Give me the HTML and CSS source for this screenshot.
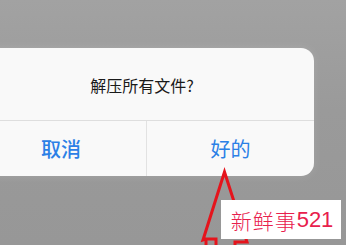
FILE: index.html
```html
<!DOCTYPE html>
<html lang="zh">
<head>
<meta charset="utf-8">
<link rel="stylesheet" href="styles.css">
</head>
<body>
<div class="screen">
  <div class="dialog">
    <div class="title">解压所有文件?</div>
    <div class="actions">
      <div class="btn cancel">取消</div>
      <div class="btn ok">好的</div>
    </div>
  </div>
  <svg class="arrow" width="346" height="245" viewBox="0 0 346 245">
    <polyline points="206,248 206,239 216,239 216,248" fill="none" stroke="#e5141c" stroke-width="3" stroke-linejoin="miter"/>
    <polyline points="206,239 203,240 224.5,172 247,242 235,242 235,248" fill="none" stroke="#e5141c" stroke-width="3" stroke-linejoin="miter"/>
  </svg>
  <div class="mark"><span class="kai">新鲜事</span><span class="num">521</span></div>
</div>
</body>
</html>
```
FILE: styles.css
```css
html, body {
  margin: 0;
  padding: 0;
}
body {
  width: 346px;
  height: 245px;
  overflow: hidden;
  background: linear-gradient(#a2a2a2, #9a9a9a 45%, #979797);
  font-family: "Noto Sans CJK SC", "Noto Sans", sans-serif;
}
.screen {
  position: relative;
  width: 346px;
  height: 245px;
  padding-top: 48px;
  box-sizing: border-box;
}
.dialog {
  margin-left: -24px;
  width: 338px;
  height: 128px;
  background: #f9f9f9;
  border-radius: 0 13px 13px 0;
  box-shadow: 0 0 10px rgba(255,255,255,0.12);
  display: flex;
  flex-direction: column;
}
.title {
  height: 73px;
  box-sizing: border-box;
  border-bottom: 1px solid #dedede;
  display: flex;
  align-items: center;
  justify-content: center;
  padding-top: 2px;
  padding-right: 6px;
  font-size: 16px;
  color: #1a1a1a;
}
.actions {
  flex: 1;
  display: grid;
  grid-template-columns: 171px 1fr;
}
.btn {
  display: flex;
  align-items: center;
  justify-content: center;
  font-size: 20px;
  color: #2b80e6;
  padding-bottom: 1px;
}
.cancel {
  font-weight: 500;
  border-right: 1px solid #e2e2e2;
}
.ok {
  font-weight: 400;
}
.arrow {
  position: absolute;
  left: 0;
  top: 0;
}
.mark {
  position: absolute;
  left: 221px;
  top: 200px;
  width: 120px;
  height: 39px;
  background: #ffffff;
  display: flex;
  align-items: center;
  justify-content: center;
  color: #e8204c;
  font-size: 21px;
  padding-left: 2px;
  box-sizing: border-box;
}
.kai {
  font-family: "Noto Sans CJK SC", sans-serif;
  font-weight: 300;
  letter-spacing: 1px;
}
.num {
  font-family: "Liberation Sans", sans-serif;
  font-size: 22px;
}
```
